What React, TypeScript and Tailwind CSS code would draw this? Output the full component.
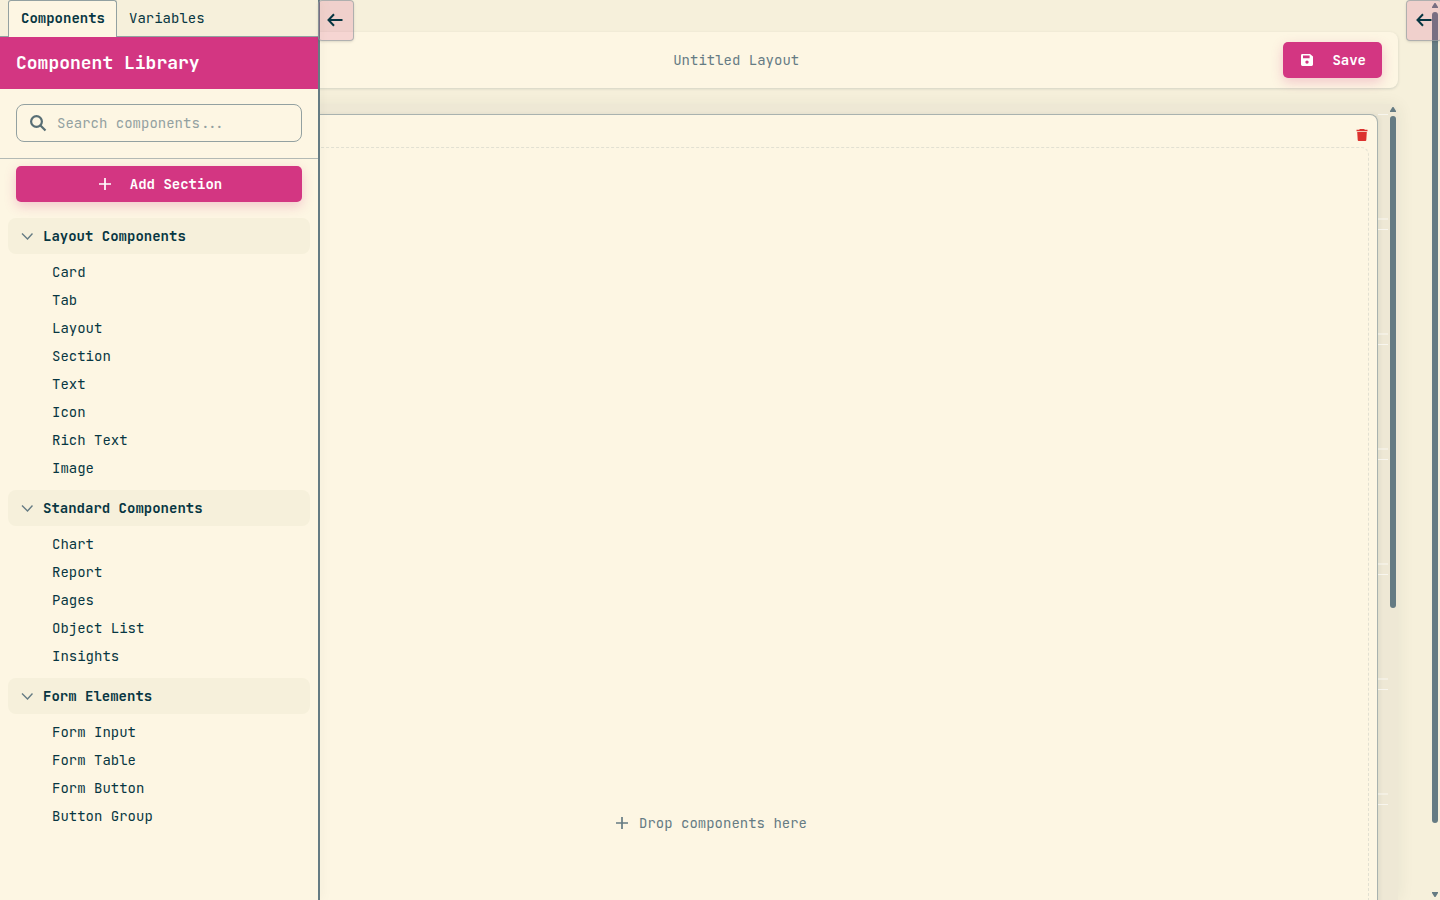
import { ReactNode } from "react";

const groups: { title: string; items: string[] }[] = [
  {
    title: "Layout Components",
    items: ["Card", "Tab", "Layout", "Section", "Text", "Icon", "Rich Text", "Image"],
  },
  {
    title: "Standard Components",
    items: ["Chart", "Report", "Pages", "Object List", "Insights"],
  },
  {
    title: "Form Elements",
    items: ["Form Input", "Form Table", "Form Button", "Button Group"],
  },
];

function SearchIcon() {
  return (
    <svg viewBox="0 0 18 18" className="size-[18px] shrink-0 text-[#586e75]" fill="none" stroke="currentColor" strokeWidth="2.2" aria-hidden="true">
      <circle cx="7.500" cy="7.500" r="5.400" />
      <path d="m11.500 11.500 5 5" />
    </svg>
  );
}

function PlusIcon() {
  return (
    <svg viewBox="0 0 14 14" className="size-[14px] shrink-0" fill="none" stroke="currentColor" strokeWidth="1.7" aria-hidden="true">
      <path d="M7 1v12M1 7h12" />
    </svg>
  );
}

function SaveIcon() {
  return (
    <svg viewBox="0 0 12 12" className="size-3 shrink-0" fill="currentColor" aria-hidden="true">
      <path fillRule="evenodd" d="M1.4 0H9l3 2.6v8A1.4 1.4 0 0 1 10.6 12H1.4A1.4 1.4 0 0 1 0 10.6V1.4A1.4 1.4 0 0 1 1.4 0Zm.6 1.6v2.6h6.6V1.6ZM6 6.4a1.7 1.7 0 1 0 0 3.4 1.7 1.7 0 0 0 0-3.4Z" />
    </svg>
  );
}

function TrashIcon() {
  return (
    <svg viewBox="0 0 12 14" className="h-[14px] w-3" fill="currentColor" aria-hidden="true">
      <path d="M3.800 1h4.400l.6.8H11.500v1.400H.5V1.800h2.700ZM1.200 4h9.600l-.5 8a1 1 0 0 1-1 1H2.700a1 1 0 0 1-1-1Z" />
    </svg>
  );
}

function ArrowLeftIcon() {
  return (
    <svg viewBox="0 0 16 14" className="h-[14px] w-4 shrink-0" fill="none" stroke="currentColor" strokeWidth="2" aria-hidden="true">
      <path d="M15.500 7H1.500M7 1.300 1.500 7 7 12.700" />
    </svg>
  );
}

function ChevronIcon() {
  return (
    <svg viewBox="0 0 12 8" className="h-2 w-3 shrink-0 text-[#657b83]" fill="none" stroke="currentColor" strokeWidth="1.4" aria-hidden="true">
      <path d="m1 1.500 5.500 5.500 5-5.500" />
    </svg>
  );
}

function PanelToggle({ label, className }: { label: string; className: string }) {
  return (
    <button
      type="button"
      aria-label={label}
      className={`absolute top-0 z-30 flex h-[41px] w-9 items-center rounded border border-[#93a1a1]/70 bg-[#d33682]/17 pb-px text-[#073642] shadow-sm ${className}`}
    >
      <ArrowLeftIcon />
    </button>
  );
}

function ScrollArrow({ down = false }: { down?: boolean }) {
  return (
    <svg viewBox="0 0 6 5" className="h-[5px] w-1.5 shrink-0 text-[#657b83]" fill="currentColor">
      <path d={down ? "M0 0h6v1L3.500 5h-1L0 1Z" : "M0 5h6V4L3.500 0h-1L0 4Z"} />
    </svg>
  );
}

function PrimaryButton({ icon, children, className }: { icon: ReactNode; children: ReactNode; className: string }) {
  return (
    <button
      type="button"
      className={`flex h-9 items-center justify-center rounded-[5px] bg-[#d33682] text-sm font-bold text-white shadow-[0_4px_12px_rgba(211,54,130,0.25)] ${className}`}
    >
      {icon}
      {children}
    </button>
  );
}

function Sidebar() {
  return (
    <aside className="absolute inset-y-0 left-0 z-20 flex w-80 flex-col overflow-hidden border-r-2 border-[#657b83] bg-[#fdf6e3] shadow-[2px_0_12px_rgba(0,43,54,0.04)]">
      <div role="tablist" className="flex h-[37px] shrink-0 border-b border-[#93a1a1] bg-[#f6f0db] pl-2">
        <button type="button" role="tab" aria-selected="true" className="-mb-px rounded-t-[3px] border border-b-0 border-[#93a1a1] bg-[#fdf6e3] pr-[11px] pb-0.5 pl-3 text-sm font-bold">
          Components
        </button>
        <button type="button" role="tab" aria-selected="false" className="px-3 text-sm">
          Variables
        </button>
      </div>
      <h1 className="flex h-[52px] shrink-0 items-center bg-[#d33682] px-4 text-lg font-bold text-white">Component Library</h1>
      <div className="shrink-0 border-b border-[#93a1a1]/70 px-4 pt-[15px] pb-4">
        <label className="flex h-[38px] items-center gap-2.5 rounded-lg border border-[#93a1a1] px-3">
          <SearchIcon />
          <input
            type="text"
            aria-label="Search components"
            placeholder="Search components..."
            className="min-w-0 flex-1 bg-transparent text-sm outline-none placeholder:text-[#93a1a1]"
          />
        </label>
      </div>
      <div className="px-2 pt-[7px]">
        <div className="px-2 pb-4">
          <PrimaryButton icon={<PlusIcon />} className="w-full gap-[18px] pl-0.5">
            Add Section
          </PrimaryButton>
        </div>
        {groups.map((group) => (
          <section key={group.title} className="pb-2">
            <h2>
              <button type="button" aria-expanded="true" className="flex h-9 w-full items-center gap-2.5 rounded-lg bg-[#f6f0db] px-[13px] text-sm font-bold">
                <ChevronIcon />
                {group.title}
              </button>
            </h2>
            <ul className="pt-1">
              {group.items.map((item) => (
                <li key={item} className="flex h-7 items-center pl-11 text-sm">
                  {item}
                </li>
              ))}
            </ul>
          </section>
        ))}
      </div>
    </aside>
  );
}

function Ruler() {
  return (
    <div className="w-2.5 shrink-0 pt-2.5" aria-hidden="true">
      {[0, 1, 2, 3, 4, 5, 6, 7, 8, 9, 10, 11].map((n) => (
        <div key={n} className="flex h-[115px] flex-col justify-end border-t border-white/60 pb-[9px]">
          <div className="h-0.5 bg-white/35" />
        </div>
      ))}
    </div>
  );
}

export default function App() {
  return (
    <div className="relative h-screen overflow-hidden bg-[#f6f0db] font-['JetBrains_Mono','DejaVu_Sans_Mono',monospace] text-[#073642]">
      <Sidebar />
      <PanelToggle label="Toggle left panel" className="left-[318px] pl-2" />
      <PanelToggle label="Toggle right panel" className="-right-0.5 pl-[9px]" />

      <main className="flex h-full flex-col gap-4 px-[42px] pt-8">
        <header className="grid h-14 shrink-0 grid-cols-[131px_1fr_auto] items-center rounded-lg bg-[#fdf6e3] px-4 shadow-[0_1px_3px_rgba(0,43,54,0.15)]">
          <span className="col-start-2 text-center text-sm text-[#657b83]">Untitled Layout</span>
          <PrimaryButton icon={<SaveIcon />} className="gap-[19px] pr-4 pl-[18px]">
            Save
          </PrimaryButton>
        </header>

        <div className="flex min-h-0 flex-1 items-start overflow-hidden rounded-t-lg bg-[#eee8d5] pl-0.5 shadow-[2px_0_16px_rgba(0,43,54,0.06)]">
          <section className="mt-2.5 min-w-0 flex-1 rounded-lg border border-[#93a1a1]/80 bg-[#fdf6e3] px-2 pb-2 shadow-[2px_0_4px_rgba(0,43,54,0.06)]">
            <div className="flex h-8 items-center justify-end pt-2 pr-px">
              <button type="button" aria-label="Delete section" className="text-[#dc322f]">
                <TrashIcon />
              </button>
            </div>
            <div className="flex h-[1352px] items-center justify-center gap-2.5 rounded-lg border border-dashed border-[#93a1a1]/25 text-sm text-[#657b83]">
              <PlusIcon />
              Drop components here
            </div>
          </section>
          <Ruler />
          <div className="flex w-2.5 shrink-0 flex-col items-center gap-1 pt-[3px]" aria-hidden="true">
            <ScrollArrow />
            <div className="h-[492px] w-1.5 rounded-full bg-[#657b83]" />
          </div>
        </div>
      </main>

      <div className="absolute inset-y-0 right-0 z-20 flex w-2.5 flex-col items-center py-[3px]" aria-hidden="true">
        <ScrollArrow />
        <div className="mt-1 mb-auto h-[811px] w-1.5 rounded-full bg-[#657b83]" />
        <ScrollArrow down />
      </div>
    </div>
  );
}
